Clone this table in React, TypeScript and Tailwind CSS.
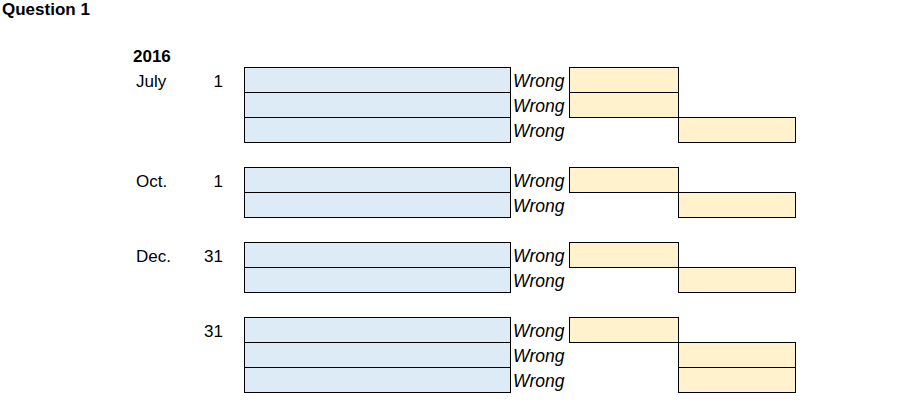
type Side = "D" | "C";

type Entry = {
  month: string;
  day: string;
  lines: Side[];
};

const entries: Entry[] = [
  { month: "July", day: "1", lines: ["D", "D", "C"] },
  { month: "Oct.", day: "1", lines: ["D", "C"] },
  { month: "Dec.", day: "31", lines: ["D", "C"] },
  { month: "", day: "31", lines: ["D", "C", "C"] },
];

const text = "pt-[4px] leading-[21px] whitespace-nowrap";

function Line({ month, day, side }: { month: string; day: string; side: Side }) {
  return (
    <>
      <div />
      <div className={`${text} pl-[3px]`}>{month}</div>
      <div className={`${text} pr-[3px] text-right`}>{day}</div>
      <div />
      <div className="h-[26px] w-[267px] border border-black bg-[#ddebf7]" />
      <div className={`${text} pl-[3px] text-[17.5px] italic`}>Wrong</div>
      {side === "D" ? (
        <div className="h-[26px] w-[110px] border border-black bg-[#fff2cc]" />
      ) : (
        <div />
      )}
      {side === "C" ? (
        <div className="h-[26px] w-[118px] border border-black bg-[#fff2cc]" />
      ) : (
        <div />
      )}
    </>
  );
}

function Blank() {
  return <div className="col-span-8" />;
}

export default function App() {
  return (
    <div className="h-[402px] w-[898px] overflow-hidden bg-white text-[17px] text-black [font-family:'Liberation_Sans',Arial,sans-serif]">
      <div className="h-[42px] pl-[2px] font-bold leading-[19px]">Question 1</div>
      <div className="grid auto-rows-[25px] grid-cols-[133px_60px_33px_18px_266px_59px_109px_118px]">
        <div />
        <div className={`${text} col-span-7 font-bold`}>2016</div>
        {entries.map((entry, i) => (
          <div key={i} className="contents">
            {entry.lines.map((side, j) => (
              <Line
                key={j}
                month={j === 0 ? entry.month : ""}
                day={j === 0 ? entry.day : ""}
                side={side}
              />
            ))}
            {i < entries.length - 1 && <Blank />}
          </div>
        ))}
      </div>
    </div>
  );
}
